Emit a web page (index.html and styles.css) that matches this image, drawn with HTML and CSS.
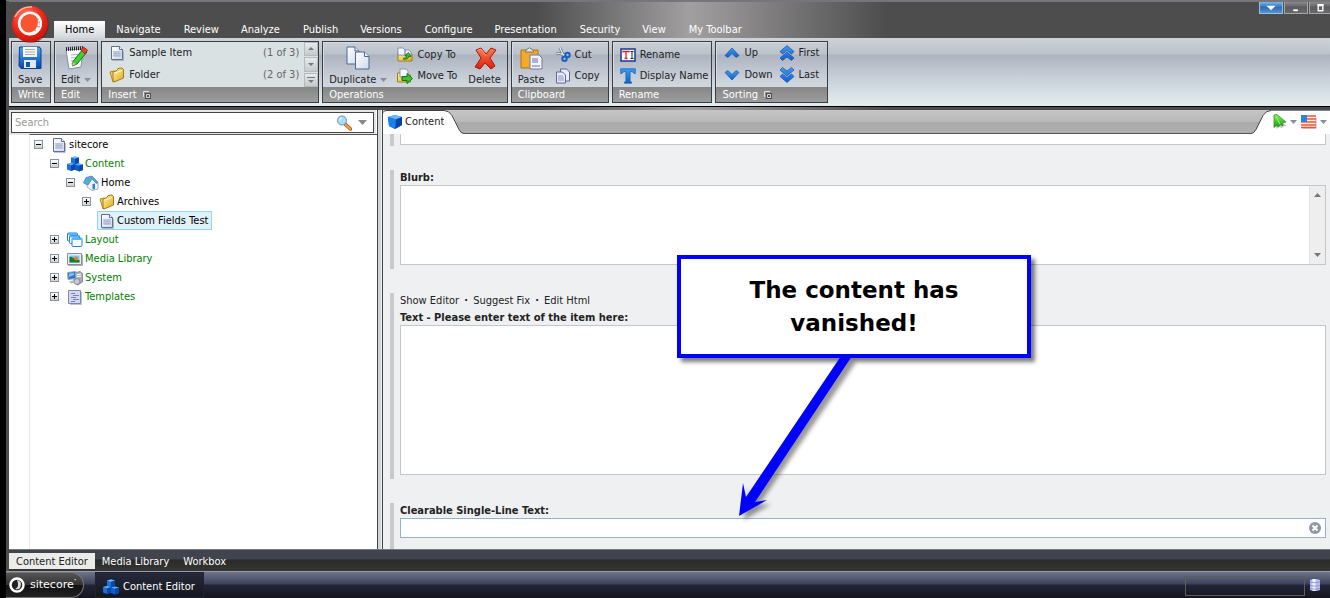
FILE: index.html
```html
<!DOCTYPE html>
<html lang="en">
<head>
<meta charset="utf-8">
<title>Content Editor</title>
<link rel="stylesheet" href="styles.css">
</head>
<body>
<svg class="defs" aria-hidden="true">
  <defs>
    <linearGradient id="g-blue" x1="0" y1="0" x2="0" y2="1"><stop offset="0" stop-color="#4aa6f4"/><stop offset="1" stop-color="#0647b4"/></linearGradient>
    <linearGradient id="g-arrow" x1="0" y1="0" x2="0" y2="1"><stop offset="0" stop-color="#3c9cf4"/><stop offset="1" stop-color="#1260cc"/></linearGradient>
    <linearGradient id="g-gold" x1="0" y1="0" x2="1" y2="1"><stop offset="0" stop-color="#fff3a8"/><stop offset="1" stop-color="#e0a81c"/></linearGradient>
    <linearGradient id="g-page" x1="0" y1="0" x2="1" y2="1"><stop offset="0" stop-color="#fff"/><stop offset="1" stop-color="#cfd9ea"/></linearGradient>
    <linearGradient id="g-red" x1="0" y1="0" x2="0" y2="1"><stop offset="0" stop-color="#ff7a50"/><stop offset="1" stop-color="#d8200c"/></linearGradient>
    <linearGradient id="g-green" x1="0" y1="0" x2="0" y2="1"><stop offset="0" stop-color="#8cf05a"/><stop offset="1" stop-color="#129a10"/></linearGradient>
    <radialGradient id="g-logo" cx=".4" cy=".3" r=".8"><stop offset="0" stop-color="#ff8a70"/><stop offset=".5" stop-color="#f32a1a"/><stop offset="1" stop-color="#c40a06"/></radialGradient>
    <symbol id="doc" viewBox="0 0 16 16"><path d="M2.500 1.500h8l3 3v10h-11z" fill="url(#g-page)" stroke="#5e6f92"/><path d="M10.500 1.500v3h3" fill="#fff" stroke="#5e6f92"/><path d="M4.500 7h7v5h-7z" fill="#b9c8e2"/><path d="M4 6.500h8M4 8.500h8M4 10.500h8" stroke="#a3b4d4" stroke-width=".7"/><path d="M3 15.500h11.500V6" fill="none" stroke="#888" opacity=".5"/></symbol>
    <symbol id="folder" viewBox="0 0 16 16"><path d="M1 5l4-1 2 1 1 8-4 2z" fill="#f6d965" stroke="#a77a10" stroke-width=".9"/><path d="M4 14.500V5l4-1.500 1-2 4-.5 1.500 1.500V11L5 15z" fill="url(#g-gold)" stroke="#a77a10"/><path d="M6 6l7-2.500" stroke="#fffbd0"/></symbol>
    <symbol id="cube" viewBox="0 0 16 16"><path d="M1 3l7-2 7 2v8l-7 4-6-3z" fill="#0a63d8"/><path d="M1 3l7-2 7 2-6 2.500z" fill="#66bafa"/><path d="M9 5.500L15 3v8l-7 4z" fill="#0543a0"/><path d="M1 3l8 2.500L8 15l-6-3z" fill="#1681ee"/></symbol>
    <symbol id="cubes" viewBox="0 0 16 16"><path d="M4 1.500L8 .5l4 1V7L8 8.500 4 7z" fill="#1c72dd"/><path d="M4 1.500L8 .5l4 1-4 1.300z" fill="#74c0fa"/><path d="M0 8l4-1 4 1v5.500L4 15l-4-1.500z" fill="#1a6ee0"/><path d="M0 8l4-1 4 1-4 1.300z" fill="#5cb0f6"/><path d="M8 8.500l4-1 4 1V14l-4 1.500L8 14z" fill="#0e5cd0"/><path d="M8 8.500l4-1 4 1-4 1.300z" fill="#5cb0f6"/><path d="M8 2.800L12 1.500V7L8 8.500zM4 9.300L8 8v5.500L4 15zM12 9.800l4-1.300V14l-4 1.500z" fill="#0a48a8"/></symbol>
    <symbol id="house" viewBox="0 0 16 16"><path d="M4 6l5-4 6 5v7l-6 1.500L4 12z" fill="#eef4fa" stroke="#8fa0b4" stroke-width=".8"/><path d="M0.500 8L3 2.500 9 1l6 6.500-1.500 1L9 4 5 10z" fill="#58a8de" stroke="#477ca8" stroke-width=".7"/><path d="M9.500 9l2.500-.5V14l-2.500.5z" fill="#2587d4"/></symbol>
    <symbol id="layers" viewBox="0 0 16 16"><g fill="#fff" stroke="#2080e0"><rect x=".5" y="1" width="10" height="8" rx="1"/><rect x="2.500" y="3.500" width="10" height="8" rx="1"/><rect x="5" y="6" width="10" height="8.500" rx="1"/></g><path d="M1 2h9M3 4.500h9M5.500 7h9" stroke="#55b4fa" stroke-width="2"/></symbol>
    <symbol id="photo" viewBox="0 0 16 16"><path d="M.5 2.500h14v11H.5z" fill="#e8eef6" stroke="#8090a8"/><path d="M2.500 4.500h10v7h-10z" fill="#70c8fa"/><path d="M2.500 6c3-1 4 3 10 3v2.500h-10z" fill="#1a7b24"/><circle cx="9" cy="7.500" r="2" fill="#f77620"/><path d="M1 14.500h14.500V4" fill="none" stroke="#777" opacity=".6"/></symbol>
    <symbol id="system" viewBox="0 0 16 16"><path d="M7 3l6-1.500 2.500 2V12l-5 3L7 12z" fill="#a9adb9" stroke="#686d7c" stroke-width=".7"/><path d="M9 5l5-1M9 7l5-1" stroke="#fff"/><path d="M.5 2.500l8-1 .5 7-8 1z" fill="#2876ce" stroke="#9aaabd"/><path d="M2 3.500l5-.5v2L2 7z" fill="#80c2f6"/><circle cx="10" cy="11.500" r="3" fill="#c7cad2" stroke="#777" stroke-width=".8"/><path d="M2 11.500l4-1 2 2-4 1z" fill="#aeb5c2"/></symbol>
    <symbol id="template" viewBox="0 0 16 16"><path d="M1.500 1.500h12v13h-12z" fill="#d3d8ef" stroke="#7e86ac"/><path d="M4 4.500h4M6 6.500h6M4 8.500h5M6 10.500h6M4 12.500h4" stroke="#6670a0" stroke-width=".8"/><path d="M14.500 3v12.500H3" stroke="#888" fill="none" opacity=".5"/></symbol>
    <symbol id="save" viewBox="0 0 24 24"><path d="M1.500 1h20L23 3v19.500h-20L1 20z" fill="url(#g-blue)" stroke="#103c88"/><path d="M5 1h14v10H5z" fill="#f5f6f6"/><path d="M7 3.500h10M7 6h10M7 8.500h10" stroke="#aaa"/><path d="M6 14h12v8H6z" fill="#e5e9ee"/><path d="M8 16h4v5H8z" fill="#1254b4"/></symbol>
    <symbol id="edit" viewBox="0 0 24 24"><path d="M2 4l17-1-2 18-12 2z" fill="#fafcff" stroke="#8390a4"/><path d="M7 9l10-1M7 12l9-1M7 15l8-1M7 18l7-1" stroke="#a7bacd"/><path d="M2 3l17-1" stroke="#222" stroke-width="4" stroke-dasharray="1 1"/><path d="M19 3l4 3-10 12-4.500 2 .5-4.500z" fill="#43cf30" stroke="#127414"/><path d="M17 4l2.500-3 4 3L21 8z" fill="#ee3b24" stroke="#8e160a" stroke-width=".7"/><path d="M9 16l3 2-4 2z" fill="#e6bd82"/></symbol>
    <symbol id="duplicate" viewBox="0 0 24 24"><g fill="url(#g-page)" stroke="#4a6a94"><path d="M1 1h8l4 4v13H1z"/><path d="M9 1v4h4"/><path d="M9.500 6h9l4.500 4.500V23H9.500z"/><path d="M18.500 6v4.500H23"/></g></symbol>
    <symbol id="x" viewBox="0 0 24 24"><path d="M3 4l5-2 5 6 5-6 5 2-6 8 5 8-4 3-6-6-5 6-5-2 6-9z" fill="url(#g-red)" stroke="#a9160b"/><path d="M4.500 4.500L8 3l5 7" fill="none" stroke="#ffb093" stroke-width=".8"/></symbol>
    <symbol id="paste" viewBox="0 0 24 24"><path d="M2 4h17v18H2z" fill="#f5a92b" stroke="#b37115"/><path d="M6 6l2-3h1q1-3 3 0h1l2 3z" fill="#e4e4e4" stroke="#777"/><path d="M11 9h9l3 3v11H11z" fill="#f2f3fc" stroke="#7078a0"/><path d="M13 12h6v5h-6zM13 19h8v2h-8z" fill="#aab0d6"/></symbol>
    <symbol id="copyto" viewBox="0 0 16 16"><path d="M1 5h5l1 2h8v7H1z" fill="url(#g-gold)" stroke="#a08010"/><path d="M1 1h5l2 2v5H1zM8 3h4l2 2v4H8z" fill="#f5f8ff" stroke="#7287ac" stroke-width=".8"/><path d="M6 12q5 1 6-3l2 .5-2.500-4-3.500 3 2 .2Q9 11 6 12z" fill="#3dc32f" stroke="#11660e" stroke-width=".8"/></symbol>
    <symbol id="moveto" viewBox="0 0 16 16"><path d="M.5 5h5l1 2h7v7h-13z" fill="url(#g-gold)" stroke="#a08010"/><path d="M3 1h6l2 2v6H3z" fill="#f5f8ff" stroke="#7287ac" stroke-width=".8"/><path d="M5 8.500h5V5.500l5.500 5-5.500 5v-3H5z" fill="#3dc32f" stroke="#11660e" stroke-width=".9"/></symbol>
    <symbol id="cut" viewBox="0 0 16 16"><path d="M1 6l10 2M5 1l4 9" stroke="#5f6d7e" stroke-width="2.600"/><path d="M1 6l10 2M5 1l4 9" stroke="#eef3f7" stroke-width="1.200"/><g fill="none" stroke="#1860be" stroke-width="2"><circle cx="12.500" cy="8" r="2.200"/><circle cx="9.500" cy="11.800" r="2.200"/></g></symbol>
    <symbol id="copy" viewBox="0 0 16 16"><g fill="#e9ecfb" stroke="#5e669c"><path d="M5.500 1h6l3 3v9h-9z"/><path d="M1.500 4h6l3 3v8h-9z"/></g><path d="M3 8h5M3 10h6M3 12h6" stroke="#8991c0"/></symbol>
    <symbol id="rename" viewBox="0 0 16 16"><path d="M1 2h14v12H1z" fill="#fff" stroke="#0e3b92" stroke-width="1.500"/><path d="M3 5.500V4.500h6v1M6 4.500v7M4.500 11.500h3" stroke="#e11c30" stroke-width="1.300" fill="none"/><path d="M10.500 4.500h3M12 5v6.500M10.500 11.500h3" stroke="#222" fill="none"/></symbol>
    <symbol id="bigt" viewBox="0 0 16 16"><path d="M.7.8h14.600V5.500h-1.200q-.5-2-3-2h-1v9q0 1.500 1.500 1.500v1.200H4.400V14q1.500 0 1.500-1.500v-9h-1q-2.500 0-3 2H.7z" fill="url(#g-arrow)" stroke="#0b5bb5" stroke-width=".7"/></symbol>
    <symbol id="up" viewBox="0 0 16 16"><path d="M1 10.500L8 3l7 7.500-3 2L8 8.500l-4 4z" fill="url(#g-arrow)" stroke="#0b3f94" stroke-width=".6"/></symbol>
    <symbol id="down" viewBox="0 0 16 16"><path d="M1 5.500l3-2 4 4 4-4 3 2L8 13z" fill="url(#g-arrow)" stroke="#0b3f94" stroke-width=".6"/></symbol>
    <symbol id="first" viewBox="0 0 16 16"><path d="M1 6.500L8 .5l7 6-2.500 2.500L8 5.500 3.500 9zM1 13l7-6 7 6-2.500 2.500L8 12 3.500 15.500z" fill="url(#g-arrow)" stroke="#0b3f94" stroke-width=".6"/></symbol>
    <symbol id="last" viewBox="0 0 16 16"><path d="M1 3L3.500.5 8 4 12.500.5 15 3 8 9zM1 9.500L3.500 7 8 10.500 12.500 7 15 9.500l-7 6z" fill="url(#g-arrow)" stroke="#0b3f94" stroke-width=".6"/></symbol>
    <symbol id="glass" viewBox="0 0 16 16"><path d="M9 9l5.500 5" stroke="#9b4c10" stroke-width="3.500" stroke-linecap="round"/><path d="M9.500 9.500l5 4.500" stroke="#f7a43c" stroke-width="2" stroke-linecap="round"/><circle cx="6" cy="5.500" r="4.500" fill="#a9dcfa" stroke="#6294c0"/><path d="M3.500 5.500q0-2.500 2.500-2.500" stroke="#fff" fill="none"/></symbol>
    <symbol id="caret" viewBox="0 0 9 5"><path d="M0 0h9L4.500 5z" fill="currentColor"/></symbol>
    <symbol id="launch" viewBox="0 0 8 8"><path d="M.5 6V.5H6" fill="none" stroke="#e2e2e2"/><path d="M2 2h6v6H2z" fill="#4e4e4e"/><path d="M3.500 6.500v-3h3v3z" fill="none" stroke="#ddd"/></symbol>
    <symbol id="flag" viewBox="0 0 16 14"><path d="M1.500 2.500h14v11h-14z" fill="#777" opacity=".6"/><path d="M.5.500h14v12H.5z" fill="#fff5ee"/><path d="M0 1h15M0 4h15M0 7h15M0 10h15M0 12.500h15" stroke="#f05335" stroke-width="1.500"/><path d="M0 0h6v7H0z" fill="#2587dc"/></symbol>
    <symbol id="publish" viewBox="0 0 14 15"><path d="M3 4l11 8-4 .5-1.500 2-2-1.500L3 15z" fill="#777" opacity=".4"/><path d="M1 1l3-.5L13 8 9.500 9l.5 3-3-1.500-1.500 2.500-2-1.500L1 13.500z" fill="url(#g-green)" stroke="#278b17" stroke-width=".7"/><path d="M3 3l4 7" stroke="#a9f783"/></symbol>
  </defs>
</svg>

<div class="window">
  <header class="titlebar">
    <button class="logo" aria-label="Sitecore menu"><svg viewBox="0 0 38 38"><circle cx="19.500" cy="20" r="18" fill="#222" opacity=".5"/><circle cx="19" cy="19" r="18" fill="url(#g-logo)"/><circle cx="19" cy="18.500" r="12" fill="#f8542f"/><circle cx="19" cy="18.500" r="10.800" fill="none" stroke="#fff" stroke-width="2.600"/><path d="M19 8q11 1 9 13-2 9-12 7 11-1 11-11 0-7-8-9z" fill="#fff"/><path d="M25 13l3 2M26 17h3M25 21l4 1M22 24l3 2" stroke="#e8644f" stroke-width=".8"/><path d="M4 12Q9 1 21 2" fill="none" stroke="#ffb5a6" stroke-width="1.500"/></svg></button>
    <nav class="tabs">
      <button class="tab on">Home</button><button class="tab">Navigate</button><button class="tab">Review</button><button class="tab">Analyze</button><button class="tab">Publish</button><button class="tab">Versions</button><button class="tab">Configure</button><button class="tab">Presentation</button><button class="tab">Security</button><button class="tab">View</button><button class="tab">My Toolbar</button>
    </nav>
    <div class="winbtns">
      <button class="wb blue" aria-label="Collapse"><svg viewBox="0 0 24 12"><path d="M7 4h10l-5 5z" fill="#fff"/></svg></button>
      <button class="wb" aria-label="Minimize"><svg viewBox="0 0 24 12"><path d="M9 8h5v2H9z" fill="#fff"/></svg></button>
      <button class="wb" aria-label="Maximize"><svg viewBox="0 0 24 12"><path d="M9 4h5v5.500H9zM8 3h7" fill="none" stroke="#fff" stroke-width="1.500"/></svg></button>
    </div>
  </header>

  <div class="ribbon">
    <section class="group">
      <div class="body"><button class="big"><svg><use href="#save"/></svg><span>Save</span></button></div>
      <h2>Write</h2>
    </section>
    <section class="group">
      <div class="body"><button class="big"><svg><use href="#edit"/></svg><span>Edit <svg class="caret"><use href="#caret"/></svg></span></button></div>
      <h2>Edit</h2>
    </section>
    <section class="group insert">
      <div class="body">
        <div class="rows">
          <button class="small"><svg><use href="#doc"/></svg>Sample Item<em>(1 of 3)</em></button>
          <button class="small"><svg><use href="#folder"/></svg>Folder<em>(2 of 3)</em></button>
        </div>
        <div class="scroller">
          <button aria-label="Previous"><svg viewBox="0 0 12 12"><path d="M3 7h6L6 4z" fill="#777"/></svg></button>
          <button aria-label="Next"><svg viewBox="0 0 12 12"><path d="M3 5h6L6 8z" fill="#777"/></svg></button>
          <button aria-label="More"><svg viewBox="0 0 12 12"><path d="M2 3.500h8" stroke="#777"/><path d="M3 6h6L6 9z" fill="#777"/></svg></button>
        </div>
      </div>
      <h2>Insert <svg><use href="#launch"/></svg></h2>
    </section>
    <section class="group">
      <div class="body">
        <button class="big"><svg><use href="#duplicate"/></svg><span>Duplicate <svg class="caret"><use href="#caret"/></svg></span></button>
        <div class="rows">
          <button class="small"><svg><use href="#copyto"/></svg>Copy To</button>
          <button class="small"><svg><use href="#moveto"/></svg>Move To</button>
        </div>
        <button class="big"><svg><use href="#x"/></svg><span>Delete</span></button>
      </div>
      <h2>Operations</h2>
    </section>
    <section class="group">
      <div class="body">
        <button class="big"><svg><use href="#paste"/></svg><span>Paste</span></button>
        <div class="rows">
          <button class="small"><svg><use href="#cut"/></svg>Cut</button>
          <button class="small"><svg><use href="#copy"/></svg>Copy</button>
        </div>
      </div>
      <h2>Clipboard</h2>
    </section>
    <section class="group rename">
      <div class="body">
        <div class="rows">
          <button class="small"><svg><use href="#rename"/></svg>Rename</button>
          <button class="small"><svg><use href="#bigt"/></svg>Display Name</button>
        </div>
      </div>
      <h2>Rename</h2>
    </section>
    <section class="group sorting">
      <div class="body">
        <div class="rows">
          <button class="small"><svg><use href="#up"/></svg>Up</button>
          <button class="small"><svg><use href="#down"/></svg>Down</button>
        </div>
        <div class="rows">
          <button class="small"><svg><use href="#first"/></svg>First</button>
          <button class="small"><svg><use href="#last"/></svg>Last</button>
        </div>
      </div>
      <h2>Sorting <svg><use href="#launch"/></svg></h2>
    </section>
  </div>

  <main class="work">
    <aside class="side">
      <div class="search">
        <input type="text" placeholder="Search" aria-label="Search">
        <button aria-label="Search"><svg class="glass"><use href="#glass"/></svg></button>
        <button aria-label="Search options"><svg class="caret"><use href="#caret"/></svg></button>
      </div>
      <ul class="tree">
        <li class="l0"><button class="tog minus" aria-label="Collapse"></button><a href="#"><svg><use href="#doc"/></svg>sitecore</a></li>
        <li class="l1 green"><button class="tog minus" aria-label="Collapse"></button><a href="#"><svg><use href="#cubes"/></svg>Content</a></li>
        <li class="l2"><button class="tog minus" aria-label="Collapse"></button><a href="#"><svg><use href="#house"/></svg>Home</a></li>
        <li class="l3"><button class="tog plus" aria-label="Expand"></button><a href="#"><svg><use href="#folder"/></svg>Archives</a></li>
        <li class="l4"><a href="#" class="sel"><svg><use href="#doc"/></svg>Custom Fields Test</a></li>
        <li class="l1 green"><button class="tog plus" aria-label="Expand"></button><a href="#"><svg><use href="#layers"/></svg>Layout</a></li>
        <li class="l1 green"><button class="tog plus" aria-label="Expand"></button><a href="#"><svg><use href="#photo"/></svg>Media Library</a></li>
        <li class="l1 green"><button class="tog plus" aria-label="Expand"></button><a href="#"><svg><use href="#system"/></svg>System</a></li>
        <li class="l1 green"><button class="tog plus" aria-label="Expand"></button><a href="#"><svg><use href="#template"/></svg>Templates</a></li>
      </ul>
    </aside>
    <div class="splitter"></div>
    <section class="editor">
      <div class="strip">
        <button class="ctab"><svg><use href="#cube"/></svg>Content</button>
        <svg class="curve" viewBox="0 0 20 24"><path d="M0 .5q5 0 8 5l7 14q2 4 5 4V24H0z" fill="#fff"/><path d="M0 .5q5 0 8 5l7 14q2 4 5 4" fill="none" stroke="#444"/></svg>
        <div class="fill"></div>
        <svg class="curve" viewBox="0 0 20 24"><path d="M20 .5q-5 0-8 5l-7 14q-2 4-5 4V24h20z" fill="#fff"/><path d="M20 .5q-5 0-8 5l-7 14q-2 4-5 4" fill="none" stroke="#444"/></svg>
        <div class="tools">
          <button aria-label="Publish"><svg class="pub"><use href="#publish"/></svg><svg class="caret"><use href="#caret"/></svg></button>
          <button aria-label="Language"><svg class="flag"><use href="#flag"/></svg><svg class="caret"><use href="#caret"/></svg></button>
        </div>
      </div>
      <div class="fields">
        <div class="field first"><input type="text" aria-label="Title"></div>
        <div class="field">
          <label for="blurb">Blurb:</label>
          <div class="scrollbox">
            <textarea id="blurb"></textarea>
            <div class="track"><svg viewBox="0 0 7 4"><path d="M0 4h7L3.500 0z" fill="#777"/></svg><svg viewBox="0 0 7 4"><path d="M0 0h7L3.500 4z" fill="#777"/></svg></div>
          </div>
        </div>
        <div class="field"><div class="links"><a href="#">Show Editor</a><i>·</i><a href="#">Suggest Fix</a><i>·</i><a href="#">Edit Html</a></div><label for="text">Text - Please enter text of the item here:</label><textarea id="text" class="text"></textarea></div>
        <div class="field last"><label for="clr">Clearable Single-Line Text:</label><div class="clearable"><input type="text" id="clr"><button aria-label="Clear"><svg viewBox="0 0 12 12"><circle cx="6" cy="6" r="6" fill="#8f97a6"/><path d="M3.500 3.500l5 5M8.500 3.500l-5 5" stroke="#fff" stroke-width="2"/></svg></button></div></div>
      </div>
    </section>
  </main>

  <nav class="views"><button class="on">Content Editor</button><button>Media Library</button><button>Workbox</button></nav>
</div>

<footer class="taskbar">
  <button class="start"><svg viewBox="0 0 16 16"><circle cx="8" cy="8" r="6.500" fill="#222" stroke="#fff" stroke-width="2.500"/><path d="M8 3q6 1 3 8-2 2-5 1 5-2 2-9z" fill="#ddd"/></svg><span>sitecore<sup>·</sup></span></button>
  <button class="task"><svg><use href="#cubes"/></svg>Content Editor</button>
  <div class="tray"><div class="well"></div><svg viewBox="0 0 12 14"><path d="M1 2q5-2 10 0v10q-5 2-10 0z" fill="#b9bdf0"/><path d="M3.500 1h3v12h-3z" fill="#f4f4ff"/><path d="M1 4q5 1.500 10 0M1 7.500q5 1.500 10 0M1 10.500q5 1.500 10 0" fill="none" stroke="#8285c0" stroke-width=".8"/></svg></div>
</footer>

<div class="callout">The content has vanished!</div>
<svg class="arrow" viewBox="0 0 130 180" aria-hidden="true"><path d="M114 4L126 6 29 149 41 148 14 164 18 132 20 145z" fill="#333" opacity=".5" class="blur"/><path d="M111 0H122L25 146 37 144 9 160 13 127 16 141z" fill="#00f"/></svg>
</body>
</html>
```
FILE: styles.css
```css
* { box-sizing: border-box; }
body {
  margin: 0;
  height: 100vh;
  display: flex;
  flex-direction: column;
  overflow: hidden;
  background: #000;
  font: 11px/14px "DejaVu Sans Condensed", "Noto Sans", sans-serif;
  color: #222;
}
button, input, textarea { font: inherit; color: inherit; }
button { padding: 0; border: 0; background: none; white-space: nowrap; }
a { color: inherit; text-decoration: none; }
svg { display: block; flex: none; }
.defs { position: absolute; width: 0; height: 0; }
.caret { width: 7px; height: 4px; color: #8490a0; }

.window {
  flex: 1;
  min-height: 0;
  margin-left: 6px;
  padding-left: 3px;
  display: flex;
  flex-direction: column;
  border-top: 1px solid #77747a;
  background: linear-gradient(90deg, #4d4d4d 530px, #a19fa0 684px, #8a8889 740px, #4d4d4d 880px);
}

.titlebar { display: flex; align-items: flex-end; height: 37px; position: relative; border-top: 1px solid #77747a; }
.logo { position: absolute; left: 2px; top: 3px; z-index: 2; }
.logo svg { width: 38px; height: 38px; }
.tabs { display: flex; padding-left: 45px; }
.tab { height: 17px; padding: 0 11px; color: #fff; }
.tab.on { background: linear-gradient(#fff, #d3d7dc); color: #000; }
.tab:nth-child(even) { padding-right: 12px; }
.winbtns { margin-left: auto; align-self: flex-start; display: flex; gap: 1px; margin-right: -3px; }
.wb { width: 24px; height: 12px; border: 1px solid #a5a5a5; border-top: 0; background: linear-gradient(#8b8b8d, #5c5c5e 50%, #6a6a6c); }
.wb svg { width: 22px; height: 11px; }
.wb.blue { background: linear-gradient(#7ab4e8, #2f6db4 50%, #5694d2); border-color: #9bc0e2; }

.ribbon {
  display: flex;
  gap: 3px;
  padding: 3px 2px;
  height: 69px;
  border-bottom: 1px solid #000;
  background: linear-gradient(#ced3da, #bcc2cb 16px, #adb4c1 17px, #c8cfd8 40px, #e2ecee 66px);
}
.group { display: flex; flex-direction: column; border: 1px solid #3b3d40; height: 62px; box-shadow: inset 1px 1px #d8dde3; }
.group .body { flex: 1; min-height: 0; display: flex; padding: 0 5px; }
.group h2 {
  flex: none;
  margin: 0;
  padding: 0 6px;
  height: 15px;
  display: flex;
  align-items: center;
  gap: 6px;
  font: inherit;
  color: #fff;
  background: linear-gradient(#858685, #9c9e9d);
}
.group h2 svg { width: 8px; height: 8px; }
.big { display: flex; flex-direction: column; align-items: center; padding: 4px 1px 0; gap: 3px; }
.big > svg { width: 24px; height: 24px; }
.big span { display: flex; align-items: center; gap: 4px; }
.big + .rows { margin-left: 6px; }
.rows + .big { margin-left: 7px; }
.rows { display: flex; flex-direction: column; padding-top: 2px; }
.small { display: flex; align-items: center; gap: 4px; height: 22px; padding: 0 3px; }
.small > svg { width: 16px; height: 16px; }
.small em { margin-left: auto; font-style: normal; color: #666; }
.insert { width: 218px; }
.insert .body { padding: 0; background: #d9e1e2; }
.insert .rows { flex: 1; padding: 0 2px 0 4px; }
.sorting .rows { padding-top: 0; }
.rename .body { padding: 0 0 0 4px; }
.scroller { width: 14px; display: flex; flex-direction: column; gap: 1px; }
.scroller button { flex: 1; min-height: 0; background: linear-gradient(#e6eaec, #c5cacd); border: 1px solid #b4babd; }
.scroller svg { width: 12px; height: 12px; }

.work { flex: 1; min-height: 0; display: flex; padding-top: 3px; }
.side { width: 368px; display: flex; flex-direction: column; background: #fff; }
.search { display: flex; align-items: center; margin: 2px 3px 1px 2px; border: 1px solid #444; height: 21px; background: #fff; box-shadow: 0 0 0 2px #e4e6e8; }
.search input { flex: 1; min-width: 0; border: 0; outline: 0; padding: 0 3px; background: none; }
.search input::placeholder { color: #999; opacity: 1; }
.search button { margin-right: 6px; }
.search .glass { width: 16px; height: 16px; }
.search .caret { width: 9px; height: 5px; color: #888; }
.tree { list-style: none; margin: 0 0 0 20px; padding: 0; border-top: 1px solid #555; border-left: 1px solid #e8e8e8; flex: 1; }
.tree li { display: flex; align-items: center; height: 19px; gap: 6px; }
.tree a { display: flex; align-items: center; gap: 2px; height: 19px; padding: 0 3px 0 1px; border: 1px solid transparent; color: #000; }
.tree a svg { width: 16px; height: 16px; }
.tree .green a { color: #008000; }
.tree a.sel { background: #dff1fb; border-color: #9bd3ef; }
.l0 { padding-left: 4px; }
.l1 { padding-left: 20px; }
.l2 { padding-left: 36px; }
.l3 { padding-left: 52px; }
.l4 { padding-left: 67px; }
.tog {
  width: 9px;
  height: 9px;
  border: 1px solid #7d95ad;
  background: linear-gradient(#000, #000) center / 5px 1px no-repeat, linear-gradient(#fff, #d2d0c4);
}
.tog.plus { background: linear-gradient(#000, #000) center / 5px 1px no-repeat, linear-gradient(#000, #000) center / 1px 5px no-repeat, linear-gradient(#fff, #d2d0c4); }
.splitter { width: 5px; background: #d0d5da; border-left: 1px solid #444; border-right: 1px solid #eee; }

.editor { flex: 1; min-width: 0; display: flex; flex-direction: column; border-left: 1px solid #444; background: #eff0f2; }
.strip { display: flex; height: 24px; background: linear-gradient(#c5c5c5, #b9b9b9 12px, #aaa 12px, #b0b0b0); }
.ctab { display: flex; align-items: center; gap: 2px; padding: 0 0 1px 4px; background: #fff; border-top: 1px solid #444; border-radius: 4px 0 0 0; }
.ctab svg { width: 16px; height: 16px; }
.curve { width: 20px; height: 24px; }
.fill { flex: 1; border-bottom: 1px solid #555; }
.tools { display: flex; align-items: center; gap: 4px; padding: 0 3px 2px 2px; background: #fff; border-top: 1px solid #77839a; }
.tools button { display: flex; align-items: center; gap: 3px; }
.pub { width: 14px; height: 15px; }
.flag { width: 16px; height: 14px; }

.fields { flex: 1; min-height: 0; overflow: hidden; display: flex; flex-direction: column; gap: 24px; padding: 0 4px 0 7px; }
.field { flex: none; display: flex; flex-direction: column; border-left: 4px solid #c8c9cc; padding: 0 0 4px 6px; }
.field label { font-weight: bold; height: 15px; line-height: 16px; }
.field input, .field textarea { display: block; width: 100%; margin: 0; border: 1px solid #c4c6ca; background: #fff; outline: 0; resize: none; }
.field.first { padding-bottom: 1px; }
.field.first input { height: 11px; border-top: 0; padding: 0; }
.scrollbox { display: flex; height: 80px; border: 1px solid #c4c6ca; }
.field .scrollbox textarea { flex: 1; border: 0; }
.track { display: flex; flex-direction: column; justify-content: space-between; align-items: center; width: 16px; padding: 7px 0; background: #eee; border-left: 1px solid #e2e2e2; }
.track svg { width: 7px; height: 4px; }
.field .text { height: 150px; }
.links { display: flex; height: 17px; line-height: 16px; }
.links i { font-style: normal; font-weight: bold; width: 14px; text-align: center; }
.field.last { flex: 1; }
.clearable { display: flex; align-items: center; height: 20px; background: #fff; border: 1px solid #93b3d2; padding-right: 4px; }
.field .clearable input { flex: 1; border: 0; height: 16px; }
.clearable svg { width: 12px; height: 12px; }

.views { display: flex; height: 22px; padding: 3px 0 2px; border-top: 1px solid #777; background: linear-gradient(#41434d 9px, #2a2a28 10px, #363634); }
.views button { color: #fff; padding: 2px 7px 0; }
.views .on { background: #ebebe9; color: #222; }

.taskbar { display: flex; height: 27px; margin-left: 6px; border-top: 1px solid #99a; background: linear-gradient(#6d748c, #3c415a 12px, #232538 13px, #14151f); color: #fff; }
.start { display: flex; align-items: center; gap: 5px; width: 78px; padding-left: 3px; border: 1px solid #777; border-left: 0; border-radius: 0 13px 13px 0; background: linear-gradient(#555, #333 50%, #111 50%, #222); font-family: "DejaVu Sans", sans-serif; }
.start svg { width: 16px; height: 16px; }
.start sup { line-height: 0; }
.task { display: flex; align-items: center; gap: 4px; margin-left: 11px; padding: 3px 8px 0 7px; background: linear-gradient(#25293a, #15161e); border: 1px solid #20222f; }
.task svg { width: 16px; height: 16px; }
.tray { margin-left: auto; display: flex; align-items: center; gap: 4px; padding-right: 9px; }
.tray svg { width: 12px; height: 14px; }
.well { width: 120px; height: 20px; border: 1px solid #5d5d5d; margin-top: 2px; }

.callout {
  position: absolute;
  left: 677px;
  top: 255px;
  width: 354px;
  height: 103px;
  padding: 15px 60px;
  border: 4px solid #00f;
  background: #fff;
  box-shadow: 4px 4px 4px rgba(0, 0, 0, .5);
  color: #000;
  text-align: center;
  font: bold 23px/33px "DejaVu Sans", sans-serif;
}
.arrow { position: absolute; left: 730px; top: 356px; width: 130px; height: 180px; }
.arrow .blur { filter: blur(2px); }
```
